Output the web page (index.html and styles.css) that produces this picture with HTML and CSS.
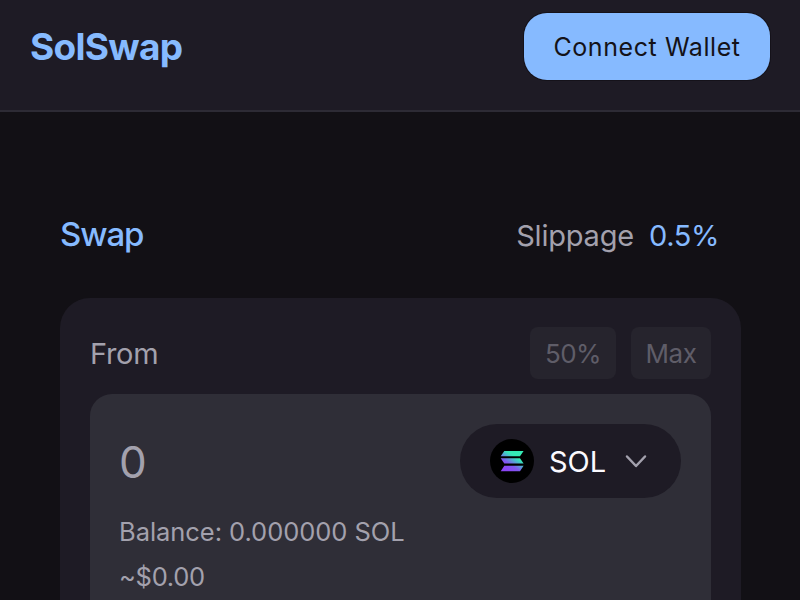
FILE: index.html
```html
<!DOCTYPE html>
<html lang="en">
<head>
<meta charset="utf-8">
<title>SolSwap</title>
<link rel="stylesheet" href="styles.css">
</head>
<body>
<header class="topbar">
  <div class="brand">SolSwap</div>
  <button class="connect">Connect Wallet</button>
</header>
<main class="swap">
  <div class="swap-head">
    <h1 class="title">Swap</h1>
    <div class="slippage"><span class="slippage-label">Slippage</span><span class="slippage-value">0.5%</span></div>
  </div>
  <section class="card">
    <div class="card-head">
      <span class="from">From</span>
      <div class="quick">
        <button class="chip chip-half">50%</button>
        <button class="chip chip-max">Max</button>
      </div>
    </div>
    <div class="field">
      <div class="field-row">
        <span class="amount">0</span>
        <button class="token">
          <svg class="coin" viewBox="0 0 44 44">
            <defs>
              <linearGradient id="sol" gradientUnits="userSpaceOnUse" x1="14" y1="32" x2="28" y2="11">
                <stop offset="0.1" stop-color="#8b45f5"/>
                <stop offset="0.35" stop-color="#8058ee"/>
                <stop offset="0.6" stop-color="#48bfca"/>
                <stop offset="0.72" stop-color="#35eab5"/>
              </linearGradient>
            </defs>
            <circle cx="22" cy="22" r="22" fill="#000"/>
            <path fill="url(#sol)" d="M14.3 12H33.6L30 17.2H10.7ZM10.7 19.2H30L33.6 24.6H14.3ZM14.3 26.8H33.6L30 32.2H10.7Z"/>
          </svg>
          <span class="symbol">SOL</span>
          <svg class="chevron" viewBox="0 0 22 14"><path d="M2 2.5L11 12L20 2.5" fill="none" stroke="#a3a1ad" stroke-width="2.5" stroke-linecap="round" stroke-linejoin="round"/></svg>
        </button>
      </div>
      <div class="meta balance">Balance: 0.000000 SOL</div>
      <div class="meta fiat">~$0.00</div>
    </div>
  </section>
</main>
</body>
</html>
```
FILE: styles.css
```css
* { box-sizing: border-box; }
html, body { height: 100%; }
body {
  display: flex;
  flex-direction: column;
  margin: 0;
  overflow: hidden;
  background: #121015;
  color: #a3a1ad;
  font-family: Inter, "Liberation Sans", sans-serif;
}
button {
  border: 0;
  margin: 0;
  font-family: inherit;
  white-space: nowrap;
}
.topbar {
  display: flex;
  flex: none;
  justify-content: space-between;
  align-items: flex-start;
  height: 112px;
  padding: 13px 30px 0;
  background: #1e1b25;
  border-bottom: 2px solid #2d2b35;
}
.brand {
  font-size: 37px;
  font-weight: 700;
  line-height: 67px;
  letter-spacing: -0.7px;
  color: #86baff;
}
.connect {
  width: 246px;
  height: 67px;
  padding: 1px 0 0;
  border-radius: 23px;
  background: #86baff;
  box-shadow: 0 0 0 1px #15121a;
  color: #141218;
  font-size: 25px;
  line-height: 66px;
  letter-spacing: 0.58px;
}
.swap {
  display: flex;
  flex: 1;
  flex-direction: column;
  min-height: 0;
  padding: 93px 59px 0 60px;
}
.swap-head {
  display: flex;
  flex: none;
  justify-content: space-between;
  align-items: center;
  height: 60px;
  padding-right: 22px;
}
.title {
  margin: -2px 0 0;
  font-size: 33px;
  font-weight: 500;
  letter-spacing: -1.1px;
  color: #86baff;
}
.slippage {
  display: flex;
  gap: 15px;
  font-size: 29px;
  letter-spacing: -0.2px;
}
.slippage-value { color: #86baff; letter-spacing: -0.4px; }
.card {
  display: flex;
  flex: 1;
  flex-direction: column;
  min-height: 0;
  margin-top: 33px;
  padding: 29px 30px 0;
  border-radius: 30px 30px 0 0;
  background: #1e1b25;
}
.card-head {
  display: flex;
  flex: none;
  justify-content: space-between;
  align-items: center;
  height: 53px;
}
.from { font-size: 29px; letter-spacing: -0.3px; }
.quick { display: flex; gap: 15px; margin-top: -1px; }
.chip {
  height: 52px;
  padding: 0;
  border-radius: 8px;
  background: #26242d;
  color: #5f5d68;
  font-size: 26px;
  letter-spacing: -0.5px;
}
.chip-half { width: 86px; }
.chip-max { width: 80px; }
.field {
  flex: 1;
  min-height: 0;
  margin-top: 14px;
  padding: 30px 30px 0;
  border-radius: 22px 22px 0 0;
  background: #2f2e37;
}
.field-row {
  display: flex;
  justify-content: space-between;
  align-items: center;
  height: 74px;
}
.amount { margin: 1px 0 0 -1px; font-size: 44px; }
.token {
  display: flex;
  align-items: center;
  width: 221px;
  height: 74px;
  padding: 0 0 0 30px;
  border-radius: 37px;
  background: #1e1b25;
}
.coin { width: 44px; height: 44px; }
.symbol {
  width: 61px;
  margin: 1px 0 0 15px;
  text-align: left;
  color: #fbfaff;
  font-size: 29px;
}
.chevron { width: 22px; height: 14px; margin-left: 15px; }
.meta { margin-left: -1px; font-size: 25.5px; line-height: 45px; letter-spacing: -0.05px; }
.balance { margin-top: 11px; }
.fiat { letter-spacing: -0.3px; }
```
